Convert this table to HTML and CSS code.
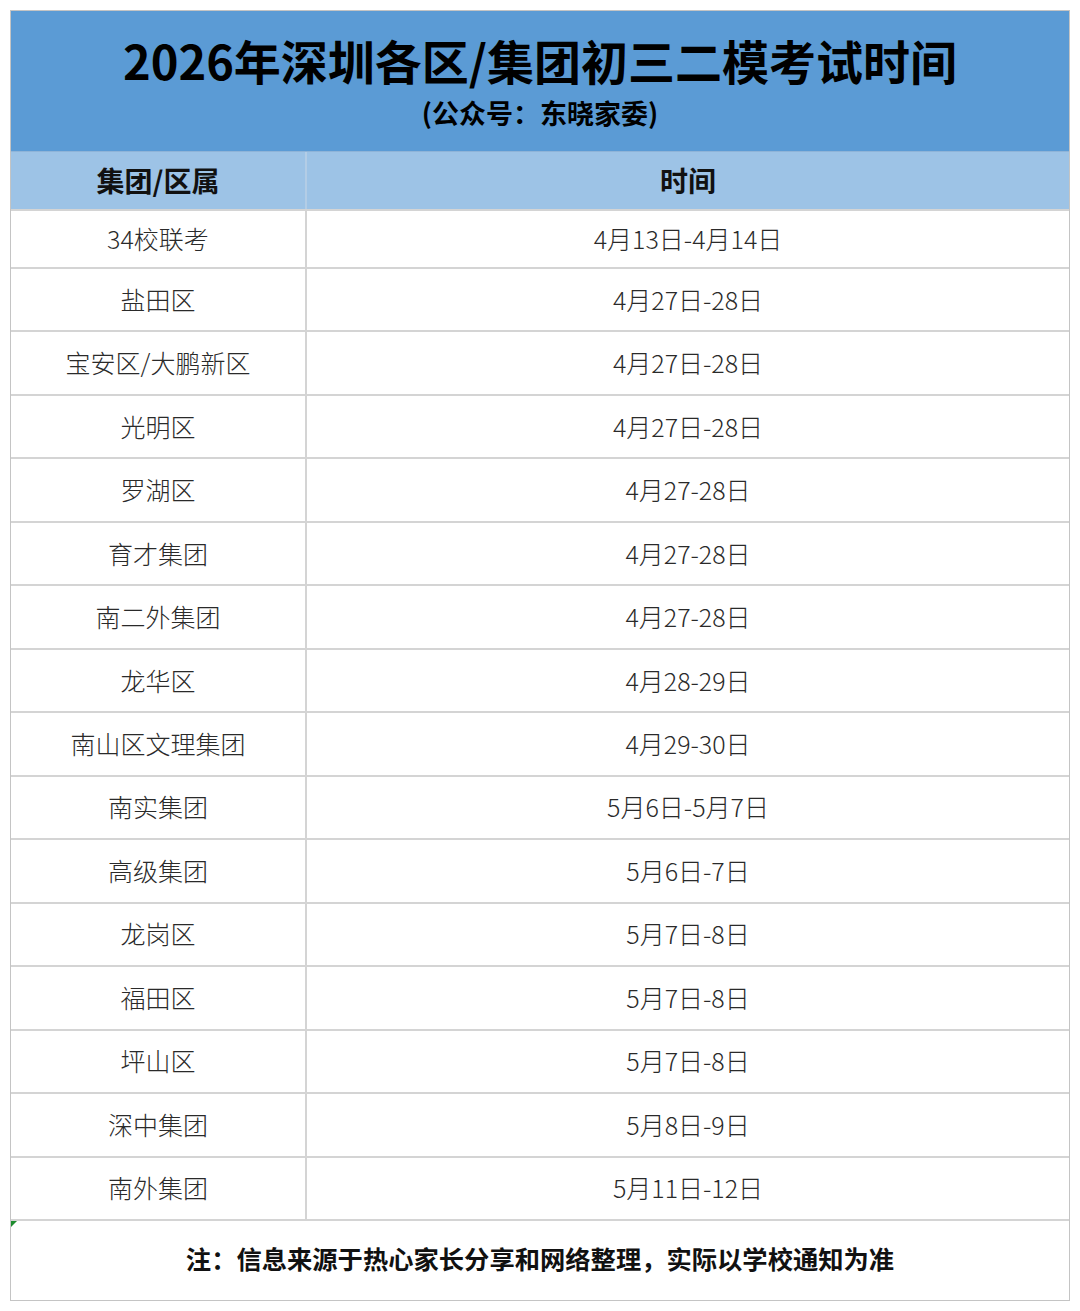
FILE: index.html
```html
<!DOCTYPE html>
<html lang="zh">
<head>
<meta charset="utf-8">
<title>2026年深圳各区/集团初三二模考试时间</title>
<link rel="stylesheet" href="styles.css">
</head>
<body>
<div class="sheet">
  <div class="banner">
    <div class="title">2026年深圳各区/集团初三二模考试时间</div>
    <div class="subtitle">(公众号：东晓家委)</div>
  </div>
  <div class="colhead">
    <div class="hcell left">集团/区属</div>
    <div class="hcell">时间</div>
  </div>
  <div class="rows">
    <div class="cell left">34校联考</div><div class="cell">4月13日-4月14日</div>
    <div class="cell left">盐田区</div><div class="cell">4月27日-28日</div>
    <div class="cell left">宝安区/大鹏新区</div><div class="cell">4月27日-28日</div>
    <div class="cell left">光明区</div><div class="cell">4月27日-28日</div>
    <div class="cell left">罗湖区</div><div class="cell">4月27-28日</div>
    <div class="cell left">育才集团</div><div class="cell">4月27-28日</div>
    <div class="cell left">南二外集团</div><div class="cell">4月27-28日</div>
    <div class="cell left">龙华区</div><div class="cell">4月28-29日</div>
    <div class="cell left">南山区文理集团</div><div class="cell">4月29-30日</div>
    <div class="cell left">南实集团</div><div class="cell">5月6日-5月7日</div>
    <div class="cell left">高级集团</div><div class="cell">5月6日-7日</div>
    <div class="cell left">龙岗区</div><div class="cell">5月7日-8日</div>
    <div class="cell left">福田区</div><div class="cell">5月7日-8日</div>
    <div class="cell left">坪山区</div><div class="cell">5月7日-8日</div>
    <div class="cell left">深中集团</div><div class="cell">5月8日-9日</div>
    <div class="cell left">南外集团</div><div class="cell">5月11日-12日</div>
  </div>
  <div class="footer">
    <span class="marker"></span>
    <div class="note">注：信息来源于热心家长分享和网络整理，实际以学校通知为准</div>
  </div>
</div>
</body>
</html>
```
FILE: styles.css
```css
html, body {
  margin: 0;
  padding: 0;
  background: #ffffff;
}
body {
  font-family: "Noto Sans CJK SC", "Noto Sans", sans-serif;
  color: #000;
}
.sheet {
  margin: 10px 0 0 10px;
  width: 1060px;
  border: 1px solid #c4c4c4;
  box-sizing: border-box;
}
.banner {
  height: 140px;
  background: #5b9bd5;
  display: flex;
  flex-direction: column;
  align-items: center;
  box-sizing: border-box;
  padding-top: 18px;
}
.title {
  font-size: 47px;
  font-weight: 700;
  line-height: 62px;
  color: #000;
}
.subtitle {
  font-size: 27px;
  font-weight: 700;
  line-height: 40px;
  margin-top: 2px;
  color: #000;
}
.colhead {
  display: grid;
  grid-template-columns: 296px 1fr;
  height: 58px;
  background: #9dc3e6;
  border-top: 1px solid #8fb4d8;
  box-sizing: border-box;
}
.hcell {
  display: flex;
  align-items: center;
  justify-content: center;
  font-size: 28px;
  font-weight: 700;
  color: #111;
  padding-bottom: 2px;
}
.hcell.left {
  border-right: 2px solid #b3cde6;
}
.rows {
  display: grid;
  grid-template-columns: 296px 1fr;
  grid-template-rows: 58px repeat(15, 1fr);
  height: 1010px;
}
.cell {
  display: flex;
  align-items: center;
  justify-content: center;
  font-size: 25px;
  font-weight: 300;
  color: #2a2a2a;
  border-top: 2px solid #d4d4d4;
  padding-bottom: 2px;
}
.cell.left {
  border-right: 2px solid #d4d4d4;
}
.footer {
  position: relative;
  height: 81px;
  border-top: 2px solid #d4d4d4;
  box-sizing: border-box;
  display: flex;
  align-items: center;
  justify-content: center;
  padding-bottom: 6px;
}
.marker {
  position: absolute;
  left: 0;
  top: 0;
  width: 0;
  height: 0;
  border-top: 6px solid #1e8c2e;
  border-right: 6px solid transparent;
}
.note {
  font-size: 25.3px;
  font-weight: 700;
  color: #111;
}
```
